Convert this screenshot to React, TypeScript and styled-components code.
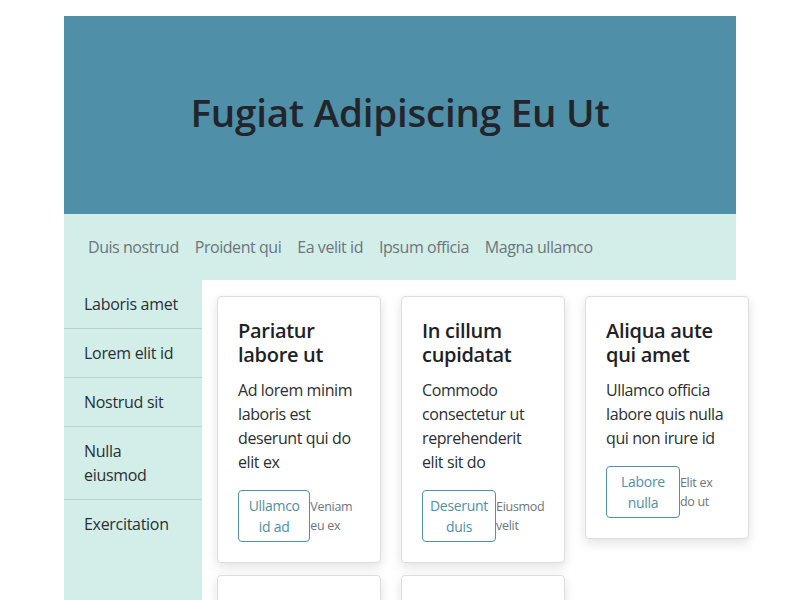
import React from "react";
import styled, { createGlobalStyle } from "styled-components";

const Global = createGlobalStyle`
  html, body { margin: 0; padding: 0; background: #fff; }
  body { padding: 16px 0 0; font-family: "Open Sans", "Noto Sans", sans-serif; color: #212529; }
  * { box-sizing: border-box; }
`;

const Page = styled.div`
  width: 672px;
  margin: 0 auto;
`;

const Header = styled.header`
  height: 198px;
  background: #4f8fa8;
  display: flex;
  align-items: center;
  justify-content: center;
  padding-bottom: 6px;
`;

const Title = styled.h1`
  margin: 0;
  font-size: 38.5px;
  line-height: 46px;
  font-weight: 600;
  letter-spacing: -0.2px;
  color: #22252a;
`;

const Nav = styled.nav`
  height: 66px;
  background: #d3eee9;
  display: flex;
  align-items: center;
  gap: 16px;
  padding: 0 24px;
`;

const NavLink = styled.a`
  font-size: 16px;
  letter-spacing: -0.45px;
  color: #6c757d;
  text-decoration: none;
`;

const Body = styled.div`
  display: flex;
  align-items: stretch;
  min-height: 340px;
`;

const Sidebar = styled.aside`
  width: 138px;
  flex: none;
  background: #d3eee9;
`;

const SideItem = styled.div`
  padding: 12px 20px;
  font-size: 16px;
  line-height: 24px;
  letter-spacing: -0.3px;
  color: #2b2f33;
  border-bottom: 1px solid #b8d3cf;
  &:last-child { border-bottom: none; }
`;

const Main = styled.main`
  flex: 1;
  padding: 16px 15px;
  background: #fff;
`;

const Grid = styled.div`
  display: grid;
  grid-template-columns: repeat(3, 164px);
  column-gap: 20px;
  row-gap: 12px;
  align-items: start;
`;

const Card = styled.div`
  background: #fff;
  border: 1px solid #dedede;
  border-radius: 4px;
  box-shadow: 0 4px 12px rgba(0, 0, 0, 0.12);
  padding: 20px;
  min-height: 60px;
`;

const CardTitle = styled.h3`
  margin: 2px 0 11px;
  font-size: 20px;
  line-height: 24px;
  font-weight: 600;
  letter-spacing: -0.3px;
  color: #1e2125;
`;

const CardText = styled.p`
  margin: 0 0 16px;
  font-size: 16px;
  line-height: 24px;
  letter-spacing: -0.4px;
  color: #2b2f33;
`;

const Footer = styled.div`
  display: flex;
  align-items: flex-start;
`;

const Button = styled.button`
  font-family: inherit;
  font-size: 14px;
  line-height: 21px;
  letter-spacing: -0.3px;
  color: #4f8fa8;
  background: #fff;
  border: 1px solid #4f8fa8;
  border-radius: 4px;
  padding: 4px 7px;
  text-align: center;
`;

const Meta = styled.span`
  font-size: 12.5px;
  line-height: 19px;
  letter-spacing: -0.3px;
  color: #6c757d;
  padding-top: 7px;
`;

const cards = [
  { t: "Pariatur labore ut", d: "Ad lorem minim laboris est deserunt qui do elit ex", b: "Ullamco id ad", m: "Veniam eu ex" },
  { t: "In cillum cupidatat", d: "Commodo consectetur ut reprehenderit elit sit do", b: "Deserunt duis", m: "Eiusmod velit" },
  { t: "Aliqua aute qui amet", d: "Ullamco officia labore quis nulla qui non irure id", b: "Labore nulla", m: "Elit ex do ut" },
  { t: "Dolor sit amet", d: "Lorem ipsum dolor sit amet", b: "Minim", m: "Sed do" },
  { t: "Esse cillum", d: "Quis nostrud exercitation", b: "Nisi", m: "Ut enim" },
];

export default function App() {
  return (
    <>
      <Global />
      <Page>
        <Header>
          <Title>Fugiat Adipiscing Eu Ut</Title>
        </Header>
        <Nav>
          {["Duis nostrud", "Proident qui", "Ea velit id", "Ipsum officia", "Magna ullamco"].map((n) => (
            <NavLink key={n} href="#">{n}</NavLink>
          ))}
        </Nav>
        <Body>
          <Sidebar>
            {["Laboris amet", "Lorem elit id", "Nostrud sit", "Nulla eiusmod", "Exercitation"].map((s) => (
              <SideItem key={s}>{s}</SideItem>
            ))}
          </Sidebar>
          <Main>
            <Grid>
              {cards.map((c) => (
                <Card key={c.t}>
                  <CardTitle>{c.t}</CardTitle>
                  <CardText>{c.d}</CardText>
                  <Footer>
                    <Button>{c.b}</Button>
                    <Meta>{c.m}</Meta>
                  </Footer>
                </Card>
              ))}
            </Grid>
          </Main>
        </Body>
      </Page>
    </>
  );
}
